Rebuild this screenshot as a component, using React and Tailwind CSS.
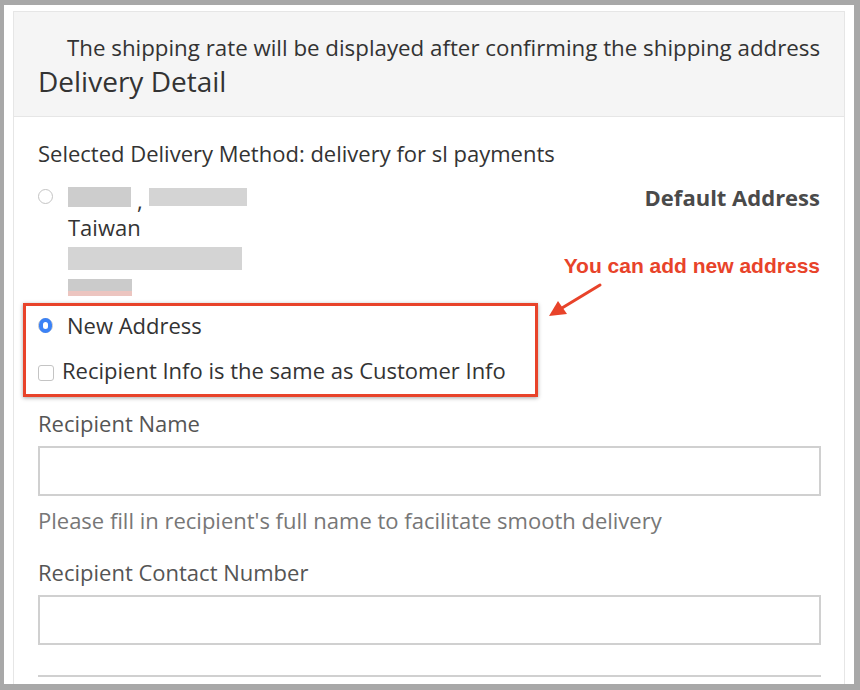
import React, { useState } from "react";

// blurred placeholder blocks (personal data masked in the screenshot)
function Blur({ className }) {
  return <span className={`inline-block ${className}`} />;
}

export default function App() {
  const [choice, setChoice] = useState("new");
  const [same, setSame] = useState(false);

  return (
    <div
      className="w-[860px] h-[690px] bg-[#a8a8a8] pt-[5px] pl-[4px] overflow-hidden"
      style={{ fontFamily: '"Open Sans", "Noto Sans", sans-serif' }}
    >
      <div className="w-[850px] h-[679px] bg-white pt-[6px] pl-[9px] overflow-hidden">
        <div className="w-[832px] h-[700px] border border-[#e6e6e6]">
          {/* Header */}
          <div className="h-[105px] bg-[#f5f5f5] border-b border-[#e6e6e6] px-[24px] pt-[21px]">
            <p className="pl-[29px] text-[22.3px] leading-[30px] text-[#333] whitespace-nowrap">
              The shipping rate will be displayed after confirming the shipping address
            </p>
            <h2 className="text-[28px] leading-[36px] text-[#333]">Delivery Detail</h2>
          </div>

          {/* Body */}
          <div className="px-[24px] pt-[22px]">
            <p className="text-[22px] leading-[28px] text-[#333]">
              Selected Delivery Method: delivery for sl payments
            </p>

            {/* Default address */}
            <div className="flex justify-between mt-[18px]">
              <label className="flex items-start gap-[15px] cursor-pointer" onClick={() => setChoice("default")}>
                <span className="mt-[4px] w-[15px] h-[15px] rounded-full border border-[#c4c4c4] bg-white flex items-center justify-center">
                  {choice === "default" && <span className="w-[7px] h-[7px] rounded-full bg-[#3b82f6]" />}
                </span>
                <span className="flex flex-col text-[22px] text-[#333]">
                  <span className="h-[24px] flex items-center gap-[6px]">
                    <Blur className="w-[63px] h-[20px] bg-[#cdcdcd]" />
                    <span className="leading-none mt-[6px]">,</span>
                    <Blur className="w-[98px] h-[18px] bg-[#d4d4d4]" />
                  </span>
                  <span className="leading-[28px] mt-[4px]">Taiwan</span>
                  <Blur className="mt-[6px] w-[174px] h-[23px] bg-[#d4d4d4]" />
                  <span className="mt-[9px] flex flex-col">
                    <Blur className="w-[64px] h-[12px] bg-[#cbcbcb]" />
                    <Blur className="w-[64px] h-[5px] bg-[#ecc5c0]" />
                  </span>
                </span>
              </label>
              <span className="text-[22px] leading-[24px] font-bold text-[#4a4a4a]">Default Address</span>
            </div>

            {/* Highlighted new-address option */}
            <div className="relative mt-[7px]">
              <div className="ml-[-15px] w-[515px] h-[94px] border-[3px] border-[#e8432a] shadow-[0_1px_4px_rgba(0,0,0,0.35)] pl-[12px] pt-[6px]">
                <label className="flex items-center gap-[14px] h-[26px] cursor-pointer" onClick={() => setChoice("new")}>
                  <span className="w-[15px] h-[15px] rounded-full border border-[#c4c4c4] bg-white flex items-center justify-center">
                    {choice === "new" && <span className="w-[15px] h-[15px] rounded-full border-[4.5px] border-[#3b82f6] bg-white" />}
                  </span>
                  <span className="text-[22px] text-[#333]">New Address</span>
                </label>
                <label className="flex items-center gap-[8px] h-[26px] mt-[19px] cursor-pointer">
                  <input
                    type="checkbox"
                    checked={same}
                    onChange={() => setSame(!same)}
                    className="appearance-none w-[16px] h-[16px] rounded-[3px] border border-[#c4c4c4] bg-white mt-[5px] checked:bg-[#3b82f6]"
                  />
                  <span className="text-[22px] text-[#333] whitespace-nowrap">Recipient Info is the same as Customer Info</span>
                </label>
              </div>

              {/* annotation */}
              <span
                className="absolute right-[0px] top-[-49px] text-[21px] leading-[24px] font-bold text-[#e8432a] whitespace-nowrap"
                style={{ fontFamily: '"Liberation Sans", Arial, sans-serif' }}
              >
                You can add new address
              </span>
              <svg className="absolute left-[505px] top-[-22px]" width="64" height="44" viewBox="0 0 64 44">
                <line x1="57" y1="4" x2="19" y2="27" stroke="#e8432a" strokeWidth="3" strokeLinecap="round" />
                <polygon points="6,35 15,20 24,33" fill="#e8432a" />
              </svg>
            </div>

            {/* Recipient Name */}
            <p className="mt-[12px] text-[22px] leading-[28px] text-[#555]">Recipient Name</p>
            <input className="mt-[9px] block w-[783px] h-[50px] border-2 border-[#d0d0d0] outline-none px-3" />
            <p className="mt-[10px] text-[22px] leading-[28px] text-[#777]">
              Please fill in recipient's full name to facilitate smooth delivery
            </p>

            {/* Recipient Contact Number */}
            <p className="mt-[24px] text-[22px] leading-[28px] text-[#555]">Recipient Contact Number</p>
            <input className="mt-[9px] block w-[783px] h-[50px] border-2 border-[#d0d0d0] outline-none px-3" />

            <div className="mt-[30px] w-[783px] border-t-2 border-[#d0d0d0]" />
          </div>
        </div>
      </div>
    </div>
  );
}
